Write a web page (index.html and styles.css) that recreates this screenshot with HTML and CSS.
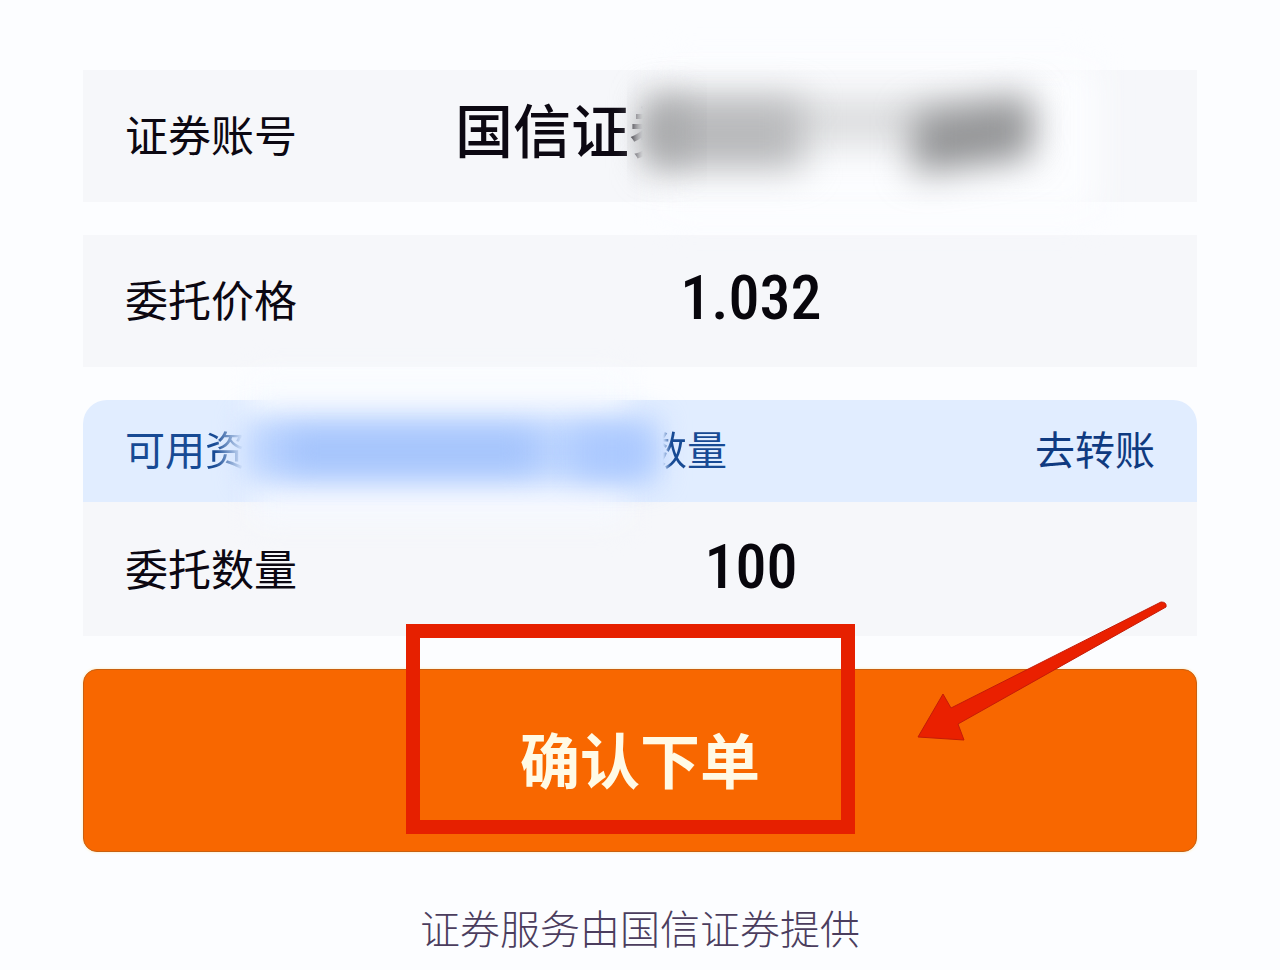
FILE: index.html
```html
<!DOCTYPE html>
<html lang="zh-CN">
<head>
    <meta charset="UTF-8">
    <title>确认下单</title>
    <link rel="stylesheet" href="styles.css">
</head>
<body>
<form class="order" action="javascript:void(0);">
    <div class="row">
        <span class="label">证券账号</span>
        <div class="account">
            <span>国信证</span>
            <div class="hidden-account">
                <span class="cut-left">券</span>
                <svg class="smudge" viewBox="0 0 418 132" aria-hidden="true">
                    <defs>
                        <filter id="soft" x="-50%" y="-100%" width="200%" height="300%" color-interpolation-filters="sRGB"><feGaussianBlur stdDeviation="18"/></filter>
                    </defs>
                    <rect x="30" y="-6" width="440" height="150" fill="#fcfdff" filter="url(#soft)"/>
                    <rect x="22" y="26" width="376" height="50" fill="#dcdddf" filter="url(#soft)"/>
                    <rect x="20" y="30" width="154" height="68" fill="#b8b9bb" filter="url(#soft)"/>
                    <rect x="18" y="34" width="40" height="56" fill="#a4a5a7" filter="url(#soft)"/>
                    <path d="M284 44 L402 28 V86 L284 104 Z" fill="#929395" filter="url(#soft)"/>
                </svg>
            </div>
        </div>
    </div>
    <div class="row">
        <label class="label" for="price">委托价格</label>
        <input class="value" type="text" id="price" value="1.032">
    </div>
    <div class="card">
        <div class="funds">
            <div class="funds-text">
                <span>可用</span><span class="fade-right">资</span>
                <svg class="funds-smudge" viewBox="0 0 402 103" aria-hidden="true">
                    <defs>
                        <filter id="softBlue" x="-30%" y="-300%" width="160%" height="700%" color-interpolation-filters="sRGB"><feGaussianBlur stdDeviation="15"/></filter>
                    </defs>
                    <rect x="6" y="-22" width="376" height="50" fill="#f8fbff" filter="url(#softBlue)"/>
                    <rect x="10" y="80" width="370" height="44" fill="#f6f9ff" filter="url(#softBlue)"/>
                    <rect x="2" y="22" width="410" height="62" fill="#bad3ff" filter="url(#softBlue)"/>
                    <rect x="40" y="36" width="250" height="36" fill="#a2c2fc" filter="url(#softBlue)"/>
                    <rect x="330" y="34" width="74" height="44" fill="#aac8ff" filter="url(#softBlue)"/>
                </svg>
                <span class="fade-left">数</span><span>量</span>
            </div>
            <a class="transfer" href="#">去转账</a>
        </div>
        <div class="row">
            <label class="label" for="amount">委托数量</label>
            <input class="value" type="text" id="amount" value="100">
        </div>
    </div>
    <div class="submit">
        <button type="submit">确认下单</button>
        <div class="frame"></div>
        <svg class="arrow" viewBox="0 0 250 142" aria-hidden="true">
            <path d="M1 137 L26 94 L34 108 L244 2 Q250 2 249 7 L41 124 L47 140 Z" fill="#ea2000" stroke="#c41c08" stroke-width="1"/>
        </svg>
    </div>
</form>
<p class="provider">证券服务由国信证券提供</p>
</body>
</html>
```

FILE: styles.css
```css
* {
    box-sizing: border-box;
}

body {
    margin: 0;
    padding: 70px 83px 0;
    background-color: #fcfdff;
    color: #0c0812;
    font-family: "Noto Sans CJK SC", sans-serif;
}

.order {
    display: flex;
    flex-direction: column;
    gap: 33px;
}

.row {
    display: flex;
    align-items: center;
    gap: 50px;
    height: 132px;
    padding: 0 42px 6px;
    background-color: #f6f7fa;
}

.label {
    flex: none;
    font-size: 43px;
    line-height: 60px;
}

.value {
    flex: 1;
    min-width: 0;
    padding: 0;
    border: none;
    outline: none;
    background: none;
    color: #08060c;
    font-family: "Roboto Condensed", Roboto, "Noto Sans CJK SC", sans-serif;
    font-size: 62px;
    font-weight: 500;
    line-height: 80px;
    text-align: center;
}

.account {
    flex: 1;
    display: flex;
    justify-content: center;
    font-size: 58px;
    font-weight: 500;
    line-height: 80px;
    padding-bottom: 10px;
}

.hidden-account {
    position: relative;
    width: 418px;
}

.cut-left {
    -webkit-mask-image: linear-gradient(to right, #000 2px, transparent 14px);
    mask-image: linear-gradient(to right, #000 2px, transparent 14px);
}

.smudge {
    position: absolute;
    left: 0;
    top: -18px;
    width: 418px;
    height: 132px;
    overflow: visible;
}

.card {
    border-radius: 24px 24px 0 0;
}

.card .row {
    height: 134px;
    padding-bottom: 4px;
}

.funds {
    display: flex;
    align-items: center;
    justify-content: space-between;
    height: 102px;
    padding: 0 42px 6px;
    border-radius: 24px 24px 0 0;
    background-color: #e1edff;
    color: #123f86;
    font-size: 40px;
    line-height: 60px;
}

.funds-text {
    display: flex;
    align-items: center;
    color: #174a94;
}

.funds-smudge {
    position: relative;
    width: 402px;
    height: 103px;
    overflow: visible;
}

.fade-right,
.fade-left {
    position: relative;
    z-index: 1;
}

.fade-right {
    -webkit-mask-image: linear-gradient(to right, #000 10px, transparent 38px);
    mask-image: linear-gradient(to right, #000 10px, transparent 38px);
}

.fade-left {
    -webkit-mask-image: linear-gradient(to left, #000 16px, transparent 24px);
    mask-image: linear-gradient(to left, #000 16px, transparent 24px);
}

.transfer {
    color: #0f3a80;
    text-decoration: none;
}

.submit {
    position: relative;
}

.submit button {
    display: block;
    width: 100%;
    height: 183px;
    padding: 0 0 6px;
    border: 1px solid #c96010;
    border-radius: 14px;
    background-color: #f86700;
    box-shadow: 0 0 3px #ffe9b8;
    color: #fffae6;
    font-family: inherit;
    font-size: 60px;
    font-weight: bold;
    line-height: 80px;
    cursor: pointer;
}

.frame {
    position: absolute;
    left: 29%;
    top: -45px;
    width: 449px;
    height: 210px;
    border: 14px solid #e62000;
    pointer-events: none;
}

.arrow {
    position: absolute;
    right: 30px;
    top: -69px;
    width: 250px;
    height: 142px;
    pointer-events: none;
}

.provider {
    margin: 45px 0 0;
    color: #4b3d5e;
    font-size: 40px;
    font-weight: 300;
    line-height: 60px;
    text-align: center;
}
```
